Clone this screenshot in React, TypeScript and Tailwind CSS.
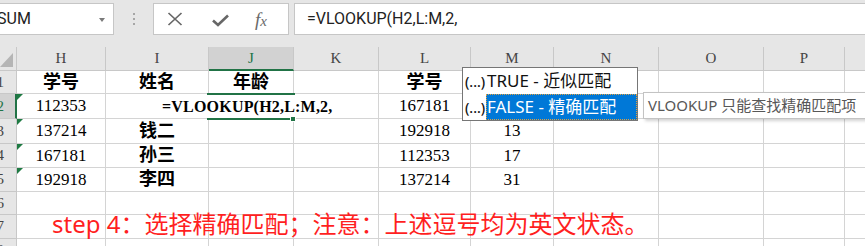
import React from 'react';

// sheet columns H..Q, widths include the right grid line
const columns = ['H', 'I', 'J', 'K', 'L', 'M', 'N', 'O', 'P', 'Q'];

const rows: string[][] = [
  ['学号', '姓名', '年龄', '', '学号', '', '', '', '', ''],
  ['112353', '', '', '', '167181', '', '', '', '', ''],
  ['137214', '钱二', '', '', '192918', '13', '', '', '', ''],
  ['167181', '孙三', '', '', '112353', '17', '', '', '', ''],
  ['192918', '李四', '', '', '137214', '31', '', '', '', ''],
  ['', '', '', '', '', '', '', '', '', ''],
  ['', '', '', '', '', '', '', '', '', ''],
  ['', '', '', '', '', '', '', '', '', ''],
];

const isCjk = (s: string) => /[\u4e00-\u9fff]/.test(s);

function TopBar() {
  return (
    <div className="flex h-[47px] items-start bg-[#e6e6e6] pt-[3px]">
      {/* Name box */}
      <div className="relative flex h-[32px] w-[114px] shrink-0 items-center overflow-hidden border border-l-0 border-[#c6c6c6] bg-white">
        <span className="-ml-[3px] font-['Roboto',sans-serif] text-[16px] text-[#222]">SUM</span>
        <span className="absolute right-[8px] top-[14px] h-0 w-0 border-x-[3px] border-t-[4px] border-x-transparent border-t-[#7a7a7a]" />
      </div>

      {/* grip dots */}
      <div className="flex w-[39px] shrink-0 flex-col items-center gap-[3px] pt-[10px]">
        <span className="h-[2px] w-[2px] bg-[#a6a6a6]" />
        <span className="h-[2px] w-[2px] bg-[#a6a6a6]" />
        <span className="h-[2px] w-[2px] bg-[#a6a6a6]" />
      </div>

      {/* cancel / enter / fx */}
      <div className="flex h-[32px] w-[136px] shrink-0 items-center border border-[#c6c6c6] bg-white">
        <svg className="ml-[13px]" width="16" height="14" viewBox="0 0 16 14">
          <path d="M1.5 1 L14.5 13 M14.5 1 L1.5 13" stroke="#676767" strokeWidth="1.7" fill="none" />
        </svg>
        <svg className="ml-[29px] mt-[2px]" width="17" height="13" viewBox="0 0 17 13">
          <path d="M1 6.5 L6 11 L16 1.5" stroke="#676767" strokeWidth="2.6" fill="none" />
        </svg>
        <span className="ml-[26px] font-['Liberation_Serif',serif] text-[19px] italic leading-none text-[#6a6a6a]">
          f<span className="text-[15px]">x</span>
        </span>
      </div>

      {/* formula box */}
      <div className="ml-[5px] flex h-[32px] w-[600px] shrink-0 items-center border border-r-0 border-[#c6c6c6] bg-white pl-[12px]">
        <span className="font-['Roboto',sans-serif] text-[16px] text-[#222]">=VLOOKUP(H2,L:M,2,</span>
      </div>
    </div>
  );
}

function Sheet() {
  return (
    <div className="grid grid-cols-[17px_89px_103px_85px_85px_92px_83px_105px_105px_81px_100px] grid-rows-[24px_23px_25px_25px_24px_24px_23px_24px_24px]">
      {/* corner */}
      <div className="relative border-b border-r border-[#c8c8c8] bg-[#e6e6e6]">
        <svg className="absolute left-0 top-[5px]" width="14" height="16" viewBox="0 0 14 16">
          <path d="M13 1 L13 15 L0 15 Z" fill="#b5b5b5" />
        </svg>
      </div>

      {/* column headers */}
      {columns.map(c =>
        c === 'J' ? (
          <div key={c} className="flex items-center justify-center border-b-2 border-r border-b-[#217346] border-r-[#c8c8c8] bg-[#d2d2d2] font-['Liberation_Serif',serif] text-[15px] text-[#217346]">
            {c}
          </div>
        ) : (
          <div key={c} className="flex items-center justify-center border-b border-r border-[#c8c8c8] bg-[#e6e6e6] font-['Liberation_Serif',serif] text-[15px] text-[#444]">
            {c}
          </div>
        )
      )}

      {rows.map((r, ri) => (
        <React.Fragment key={ri}>
          {/* row header, scrolled so only the digit's tail shows */}
          {ri === 1 ? (
            <div className="flex items-center justify-end overflow-hidden border-b border-r-2 border-b-[#c8c8c8] border-r-[#217346] bg-[#d2d2d2] pr-[11px] font-['Liberation_Serif',serif] text-[15px] text-[#217346]">
              <span>{ri + 1}</span>
            </div>
          ) : (
            <div className="flex items-center justify-end overflow-hidden border-b border-r border-[#c8c8c8] bg-[#e6e6e6] pr-[12px] font-['Liberation_Serif',serif] text-[15px] text-[#444]">
              <span>{ri + 1}</span>
            </div>
          )}

          {r.map((v, ci) => (
            <div key={ci} className="relative flex items-center justify-center border-b border-r border-[#d4d4d4]">
              {ci === 0 && ri >= 1 && ri <= 4 && (
                <span className="absolute left-0 top-0 h-0 w-0 border-r-[6px] border-t-[6px] border-r-transparent border-t-[#1f7a43]" />
              )}
              {v &&
                (isCjk(v) ? (
                  <span className="font-['Liberation_Serif','Noto_Sans_CJK_SC',serif] text-[18px] font-bold text-black">{v}</span>
                ) : (
                  <span className="font-['Liberation_Serif',serif] text-[17px] text-black">{v}</span>
                ))}
              {ri === 1 && ci === 2 && (
                <>
                  {/* in-cell edit text */}
                  <div className="absolute left-[-49px] top-[1px] z-10 flex h-[23px] items-center whitespace-nowrap bg-white pl-[2px] pr-[3px] font-['Liberation_Serif',serif] text-[16px] font-bold tracking-[0.2px] text-black">
                    =VLOOKUP(H2,L:M,2,
                  </div>
                  {/* active cell border */}
                  <span className="absolute left-[-2px] top-[-1px] z-20 h-[2px] w-[88px] bg-[#217346]" />
                  <span className="absolute left-[-2px] top-[24px] z-20 h-[2px] w-[84px] bg-[#217346]" />
                  <span className="absolute left-[81px] top-[22px] z-20 h-[6px] w-[6px] border border-white bg-[#217346]" />
                </>
              )}
            </div>
          ))}
        </React.Fragment>
      ))}
    </div>
  );
}

export default function App() {
  return (
    <div className="relative h-[246px] w-[865px] overflow-hidden bg-white font-['Noto_Sans','Noto_Sans_CJK_SC',sans-serif]">
      <TopBar />
      <Sheet />

      {/* function argument autocomplete */}
      <div className="absolute left-[462px] top-[67px] z-30 flex h-[54px] w-[176px] flex-col border border-[#767676] bg-white text-[17px] text-[#111]">
        <div className="flex h-[26px] items-center">
          <span className="w-[23px] pl-[2px] text-[14px] font-medium">(...)</span>
          <span className="pl-[1px]">TRUE - 近似匹配</span>
        </div>
        <div className="flex h-[26px] items-center">
          <span className="w-[23px] pl-[2px] text-[14px] font-medium">(...)</span>
          <span className="flex h-full flex-1 items-center bg-[#0078d7] pl-[1px] text-white outline-1 outline-dotted outline-offset-[-1px] outline-[#e0a040]">
            FALSE - 精确匹配
          </span>
        </div>
      </div>

      {/* tooltip */}
      <div className="absolute left-[643px] top-[92px] z-30 flex h-[27px] w-[240px] items-center border border-[#c3c3c3] bg-white pl-[4px] text-[15px] text-[#575757] shadow-[2px_2px_3px_rgba(0,0,0,0.18)]">
        VLOOKUP 只能查找精确匹配项
      </div>

      {/* annotation text box */}
      <div className="absolute left-[52px] top-[210px] z-30 whitespace-nowrap text-[24px] leading-[28px] text-[#ff1f1f]">
        step 4：选择精确匹配；注意：上述逗号均为英文状态。
      </div>
    </div>
  );
}
